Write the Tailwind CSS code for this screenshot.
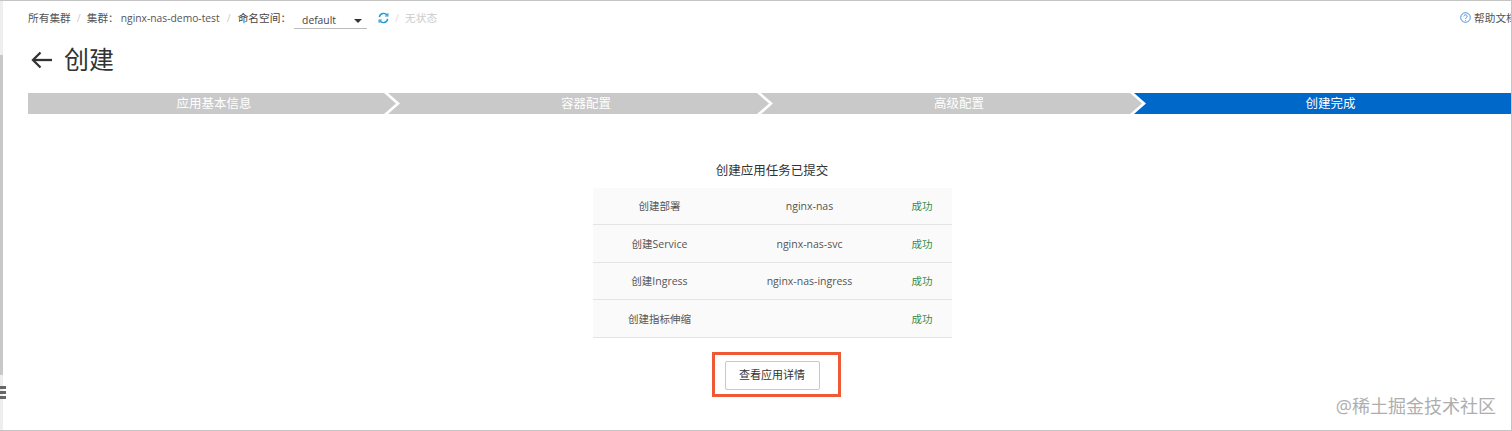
<!DOCTYPE html>
<html lang="zh-CN">
<head>
    <meta charset="UTF-8">
    <title>创建</title>
    <script src="https://cdn.jsdelivr.net/npm/@tailwindcss/browser@4"></script>
</head>
<body class="bg-white">
<div class="relative h-[431px] w-[1512px] overflow-hidden border-t border-r border-b border-[#c4c4c4] font-['Open_Sans','Noto_Sans_CJK_SC',sans-serif] text-[#555]">

    <!-- left edge of the console sidebar -->
    <div class="absolute left-0 top-0 h-[431px] w-[3px] bg-[#eeeeee]">
        <div class="mt-[54px] h-[320px] w-[3px] bg-[#c8c8c8]"></div>
        <div class="mt-[11px] flex flex-col gap-[2px]">
            <span class="h-[3px] w-[6px] bg-[#666]"></span>
            <span class="h-[3px] w-[6px] bg-[#666]"></span>
            <span class="h-[3px] w-[6px] bg-[#666]"></span>
        </div>
    </div>

    <header class="flex h-[36px] items-center pb-[2px] pl-[28px] text-[10.7px]">
        <span>所有集群</span>
        <span class="mx-[6px] text-[#ccc]">/</span>
        <span>集群：<span class="ml-[2px] text-[10.3px]">nginx-nas-demo-test</span></span>
        <span class="mx-[7px] text-[#ccc]">/</span>
        <span class="text-[#444]">命名空间：</span>
        <div class="ml-[3px] mt-[3px] flex h-[18px] w-[73px] items-center justify-between border-b border-[#bbb] pl-[8px] pr-[5px] pt-[3px] text-[10.3px] text-[#444]">
            <span>default</span>
            <span class="h-0 w-0 border-x-[4px] border-t-[4px] border-x-transparent border-t-[#333]"></span>
        </div>
        <svg class="mb-[1px] ml-[11px]" width="11" height="12" viewBox="0 0 12 12" fill="none" stroke="#1f9bd1" stroke-width="1.6">
            <path d="M1.5 5A4.6 4.6 0 0 1 10 3.2"/>
            <path d="M10.5 7A4.6 4.6 0 0 1 2 8.8"/>
            <path d="M10.8 0.8V3.8H7.8" stroke-width="1.2"/>
            <path d="M1.2 11.2V8.2H4.2" stroke-width="1.2"/>
        </svg>
        <span class="mx-[6px] text-[#ddd]">/</span>
        <span class="text-[#ccc]">无状态</span>
        <div class="ml-auto flex w-[51px] shrink-0 items-center gap-[3px] overflow-hidden whitespace-nowrap">
            <svg class="shrink-0" width="11" height="11" viewBox="0 0 11 11" fill="none" stroke="#3f86d0" stroke-width="0.9">
                <circle cx="5.5" cy="5.5" r="4.8"/>
                <path d="M3.9 4.4A1.6 1.6 0 1 1 6.3 5.8C5.7 6.1 5.5 6.4 5.5 7"/>
                <path d="M5.5 7.9V8.7"/>
            </svg>
            <span>帮助文档</span>
        </div>
    </header>

    <div class="flex h-[45px] items-center pl-[31px]">
        <svg width="22" height="18" viewBox="0 0 22 18" fill="none" stroke="#333" stroke-width="2.3">
            <path d="M21 9H2"/>
            <path d="M9.5 1.5L2 9L9.5 16.5"/>
        </svg>
        <h1 class="ml-[11px] text-[25px] font-normal leading-none text-[#333]">创建</h1>
    </div>

    <!-- steps -->
    <div class="ml-[28px] mt-[11px] flex h-[21px] text-[12.5px] leading-[21px] text-white">
        <div class="w-[368px] bg-[#c9c9c9] pl-[4px] text-center [clip-path:polygon(0_0,356px_0,368px_50%,356px_100%,0_100%)]">应用基本信息</div>
        <div class="-ml-[8px] w-[381px] bg-[#c9c9c9] pl-[15px] text-center [clip-path:polygon(0_0,369px_0,381px_50%,369px_100%,0_100%,12px_50%)]">容器配置</div>
        <div class="-ml-[8px] w-[381px] bg-[#c9c9c9] pl-[15px] text-center [clip-path:polygon(0_0,369px_0,381px_50%,369px_100%,0_100%,12px_50%)]">高级配置</div>
        <div class="-ml-[8px] flex-1 bg-[#0068c8] pl-[16px] text-center [clip-path:polygon(0_0,100%_0,100%_100%,0_100%,12px_50%)]">创建完成</div>
    </div>

    <main class="mt-[47px] flex flex-col items-center pl-[33px]">
        <h2 class="h-[20px] text-[12.5px] font-normal leading-[20px] text-[#333]">创建应用任务已提交</h2>
        <div class="mt-[7px] w-[359px] text-[10.5px] leading-none">
            <div class="grid h-[37px] grid-cols-[134px_166px_1fr] items-center border-b border-[#e4e4e4] bg-[#fafafa] text-center">
                <span>创建部署</span><span>nginx-nas</span><span class="text-[#3a8a4a]">成功</span>
            </div>
            <div class="grid h-[38px] grid-cols-[134px_166px_1fr] items-center border-b border-[#e4e4e4] bg-[#fafafa] pt-[1px] text-center">
                <span>创建Service</span><span>nginx-nas-svc</span><span class="text-[#3a8a4a]">成功</span>
            </div>
            <div class="grid h-[37px] grid-cols-[134px_166px_1fr] items-center border-b border-[#e4e4e4] bg-[#fafafa] pt-[1px] text-center">
                <span>创建Ingress</span><span>nginx-nas-ingress</span><span class="text-[#3a8a4a]">成功</span>
            </div>
            <div class="grid h-[38px] grid-cols-[134px_166px_1fr] items-center border-b border-[#e4e4e4] bg-[#fafafa] pt-[1px] text-center">
                <span>创建指标伸缩</span><span></span><span class="text-[#3a8a4a]">成功</span>
            </div>
        </div>
        <div class="ml-[8px] mt-[14px] flex h-[45px] w-[129px] items-center justify-center border-[3px] border-[#ee5a36]">
            <button class="mr-[8px] mt-[2px] h-[29px] w-[95px] rounded-[2px] border border-[#c8c8c8] bg-white text-[11px] text-[#333]">查看应用详情</button>
        </div>
    </main>

    <!-- watermark -->
    <div class="absolute bottom-[12px] right-[15px] text-[18px] leading-[24px] text-[#aeaeae]">@稀土掘金技术社区</div>
</div>
</body>
</html>
